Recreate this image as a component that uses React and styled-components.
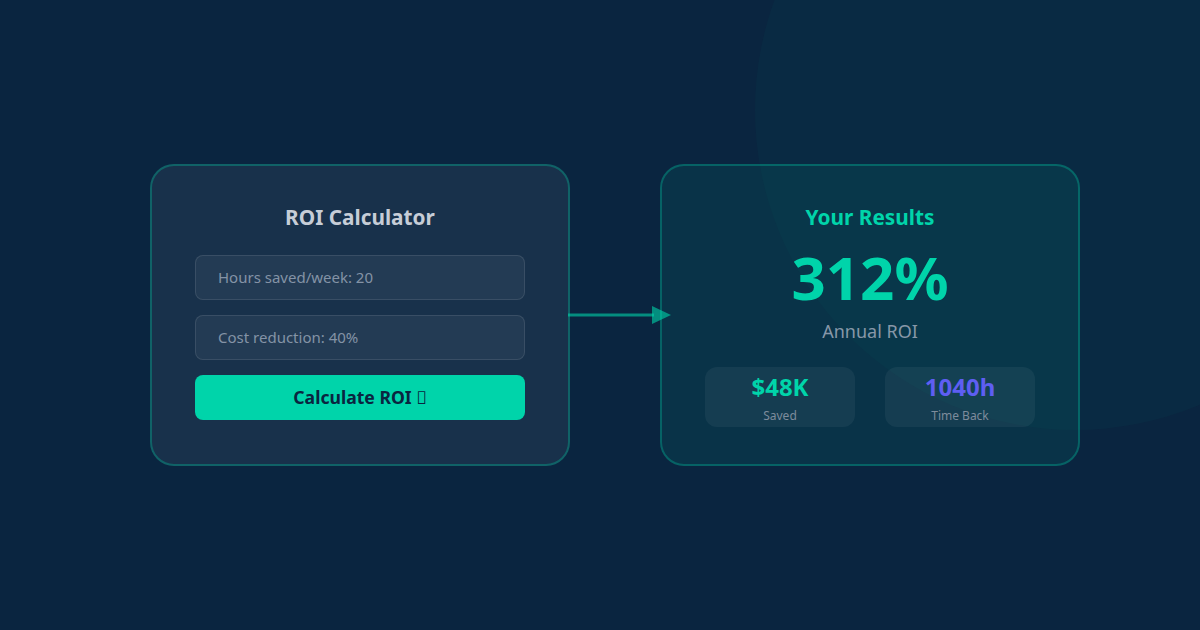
import React from 'react'
import styled, { createGlobalStyle } from 'styled-components'

const GlobalStyle = createGlobalStyle`
html, body {
  margin: 0;
  padding: 0;
  background: #0a2540;
}
* {
  box-sizing: border-box;
}
`

const Page = styled.div`
position: relative;
width: 1200px;
height: 630px;
overflow: hidden;
background: #0a2540;
font-family: 'Noto Sans', 'Open Sans', sans-serif;
display: flex;
align-items: center;
padding-left: 150px;
`

// soft glow disc in the upper right corner
const Glow = styled.div`
position: absolute;
left: 755px;
top: -210px;
width: 640px;
height: 640px;
border-radius: 50%;
background: rgba(0, 212, 170, 0.03);
`

const Row = styled.div`
position: relative;
display: flex;
align-items: center;
margin-top: -1px;
`

const Card = styled.div`
width: 420px;
height: 302px;
border: 2px solid rgba(0, 212, 170, 0.3);
border-radius: 24px;
padding: 37px 43px 0;
display: flex;
flex-direction: column;
align-items: center;
background: ${p => p.$accent ? 'rgba(0, 212, 170, 0.08)' : 'rgba(255, 255, 255, 0.06)'};
`

const Title = styled.h2`
margin: 0;
font-size: 20.8px;
line-height: 28px;
font-weight: 700;
color: ${p => p.$accent ? '#00d4aa' : '#c6cdd7'};
`

const Form = styled.div`
width: 100%;
margin-top: 24px;
display: flex;
flex-direction: column;
gap: 15px;
`

const Field = styled.div`
height: 45px;
display: flex;
align-items: center;
padding-left: 22px;
border: 1px solid rgba(255, 255, 255, 0.1);
border-radius: 8px;
background: rgba(255, 255, 255, 0.05);
color: #8493a6;
font-size: 15px;
`

const Button = styled.button`
height: 45px;
border: none;
border-radius: 8px;
background: #00d4aa;
color: #0a2540;
font-family: inherit;
font-size: 17.6px;
font-weight: 700;
cursor: pointer;
`

const Connector = styled.div`
position: relative;
width: 90px;
height: 20px;
`

const ArrowSvg = styled.svg`
position: absolute;
left: -2px;
top: 1px;
overflow: visible;
`

const BigValue = styled.div`
margin-top: 16px;
font-size: 60px;
line-height: 60px;
font-weight: 700;
color: #00d4aa;
`

const Caption = styled.div`
margin-top: 12px;
font-size: 18px;
line-height: 24px;
color: #8797a8;
`

const Stats = styled.div`
margin-top: 24px;
width: 100%;
display: grid;
grid-template-columns: 150px 150px;
justify-content: center;
gap: 30px;
`

const Stat = styled.div`
height: 60px;
border-radius: 12px;
background: rgba(255, 255, 255, 0.05);
padding: 6px 0 0;
display: flex;
flex-direction: column;
align-items: center;
gap: 7px;
`

const StatValue = styled.div`
font-size: 24px;
line-height: 28px;
font-weight: 700;
color: ${p => p.$color};
`

const StatLabel = styled.div`
font-size: 12px;
line-height: 16px;
color: #7d8c9c;
`

export default function App() {
  return (
    <Page>
      <GlobalStyle />
      <Glow />
      <Row>
        <Card>
          <Title>ROI Calculator</Title>
          <Form>
            <Field>Hours saved/week: 20</Field>
            <Field>Cost reduction: 40%</Field>
            <Button>Calculate ROI {'\u{10FFFD}'}</Button>
          </Form>
        </Card>

        <Connector>
          <ArrowSvg width="103" height="18" viewBox="0 0 103 18">
            <line x1="0" y1="9" x2="86" y2="9" stroke="rgba(0,212,170,0.6)" strokeWidth="3" />
            <polygon points="84,0 103,9 84,18" fill="rgba(0,212,170,0.6)" />
          </ArrowSvg>
        </Connector>

        <Card $accent>
          <Title $accent>Your Results</Title>
          <BigValue>312%</BigValue>
          <Caption>Annual ROI</Caption>
          <Stats>
            <Stat>
              <StatValue $color="#00d4aa">$48K</StatValue>
              <StatLabel>Saved</StatLabel>
            </Stat>
            <Stat>
              <StatValue $color="#5e5ef2">1040h</StatValue>
              <StatLabel>Time Back</StatLabel>
            </Stat>
          </Stats>
        </Card>
      </Row>
    </Page>
  )
}
